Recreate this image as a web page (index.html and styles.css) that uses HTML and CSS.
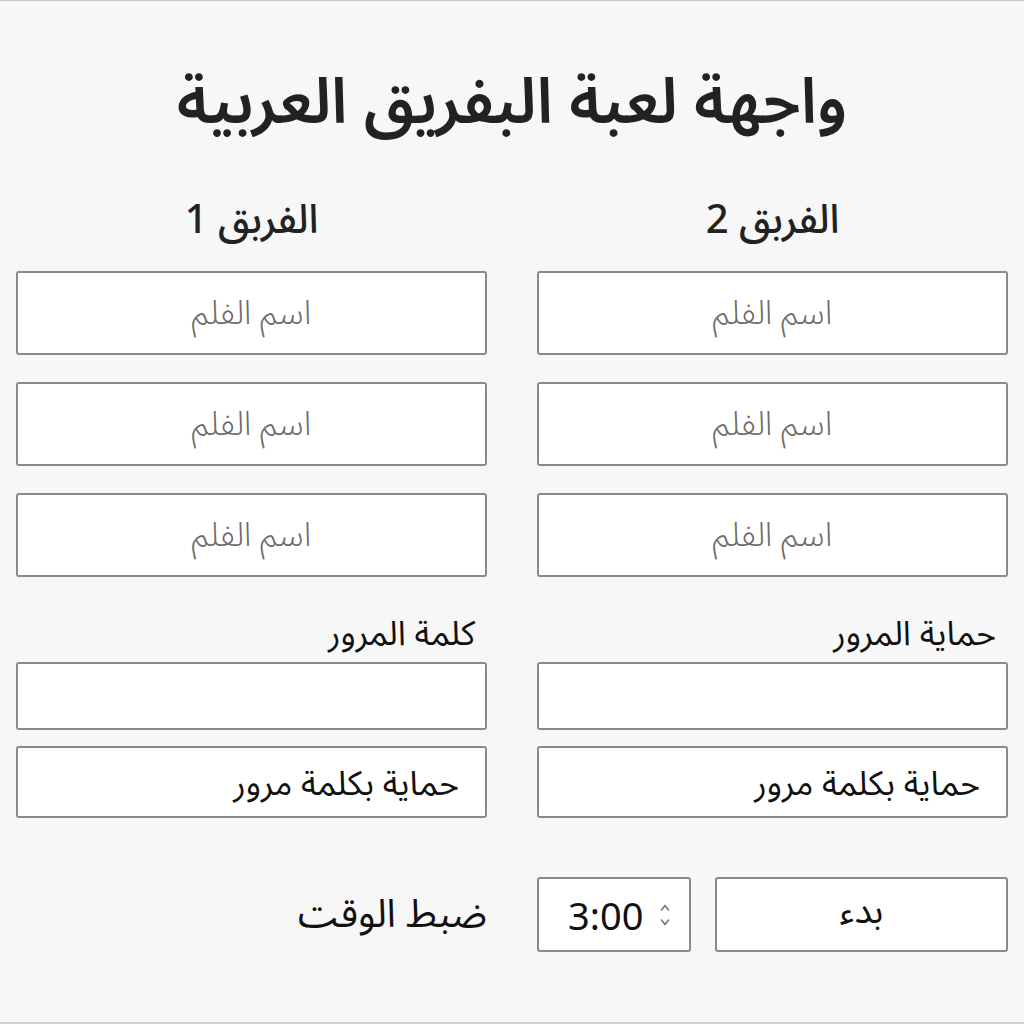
FILE: index.html
```html
<!DOCTYPE html>
<html lang="ar" dir="rtl">
<head>
<meta charset="utf-8">
<title>واجهة لعبة البفريق العربية</title>
<link rel="stylesheet" href="styles.css">
</head>
<body>
<main class="page">
  <h1 class="title">واجهة لعبة البفريق العربية</h1>
  <div class="teams">
    <section class="team">
      <h2 class="team-name">الفربق 2</h2>
      <div class="field placeholder">اسم الفلم</div>
      <div class="field placeholder">اسم الفلم</div>
      <div class="field placeholder">اسم الفلم</div>
      <label class="pw-label">حماية المرور</label>
      <div class="pw-input"></div>
      <button class="pw-btn">حماية بكلمة مرور</button>
    </section>
    <section class="team">
      <h2 class="team-name">الفربق 1</h2>
      <div class="field placeholder">اسم الفلم</div>
      <div class="field placeholder">اسم الفلم</div>
      <div class="field placeholder">اسم الفلم</div>
      <label class="pw-label">كلمة المرور</label>
      <div class="pw-input"></div>
      <button class="pw-btn">حماية بكلمة مرور</button>
    </section>
  </div>
  <div class="controls">
    <div class="control-group">
      <button class="start-btn">بدء</button>
      <div class="time-input">
        <span class="time-value">3:00</span>
        <svg class="spinner" width="12" height="32" viewBox="0 0 12 32" aria-hidden="true">
          <path d="M2.5 11 L6 6.5 L9.5 11" fill="none" stroke="#777" stroke-width="1.6" stroke-linecap="round" stroke-linejoin="round"/>
          <path d="M2.5 21 L6 25.5 L9.5 21" fill="none" stroke="#777" stroke-width="1.6" stroke-linecap="round" stroke-linejoin="round"/>
        </svg>
      </div>
    </div>
    <div class="time-label">ضبط الوقت</div>
  </div>
</main>
</body>
</html>
```
FILE: styles.css
```css
* { box-sizing: border-box; }
html, body { margin: 0; padding: 0; }
body {
  background: #f7f7f7;
  font-family: "Noto Sans Arabic", "Noto Sans", "DejaVu Sans", sans-serif;
  color: #1e1e1e;
}
.page {
  height: 1024px;
  border-top: 1px solid #c9c9c9;
  border-bottom: 2px solid #cfcfcf;
  padding: 0 16px;
}
.title {
  margin: 0;
  padding-top: 60px;
  height: 180px;
  text-align: center;
  font-size: 63px;
  font-weight: 600;
  line-height: 84px;
  color: #222;
}
.teams {
  display: grid;
  grid-template-columns: 1fr 1fr;
  column-gap: 50px;
}
.team {
  display: flex;
  flex-direction: column;
}
.team-name {
  margin: 0 0 18px;
  height: 72px;
  line-height: 80px;
  text-align: center;
  font-size: 40px;
  font-weight: 500;
  color: #222;
}
.field {
  height: 84px;
  background: #fff;
  border: 2px solid #8a8a8a;
  border-radius: 3px;
  display: flex;
  align-items: center;
  justify-content: center;
  font-size: 33px;
  margin-bottom: 27px;
}
.placeholder { color: #6c6c6c; font-weight: 300; }
.pw-label {
  margin-top: 8px;
  height: 44px;
  line-height: 44px;
  padding-right: 12px;
  font-size: 34px;
  color: #111;
  margin-bottom: 6px;
}
.pw-input {
  height: 68px;
  background: #fff;
  border: 2px solid #8a8a8a;
  border-radius: 3px;
}
.pw-btn {
  margin-top: 16px;
  height: 72px;
  background: #fff;
  border: 2px solid #8a8a8a;
  border-radius: 3px;
  font-family: inherit;
  font-size: 34px;
  color: #111;
  text-align: right;
  padding: 0 26px;
}
.controls {
  margin-top: 55px;
  display: grid;
  grid-template-columns: 1fr 1fr;
  column-gap: 50px;
  align-items: center;
}
.control-group {
  display: flex;
  gap: 24px;
  height: 75px;
}
.start-btn {
  flex: 1;
  background: #fff;
  border: 2px solid #8a8a8a;
  border-radius: 3px;
  font-family: inherit;
  font-size: 36px;
  line-height: 1;
  color: #111;
  padding-bottom: 6px;
}
.time-input {
  width: 154px;
  background: #fff;
  border: 2px solid #8a8a8a;
  border-radius: 3px;
  display: flex;
  align-items: center;
  gap: 16px;
  padding-left: 29px;
  direction: ltr;
}
.time-value {
  font-size: 38px;
  color: #111;
  font-family: "Noto Sans", "DejaVu Sans", sans-serif;
}
.time-label {
  font-size: 39px;
  color: #111;
  text-align: right;
}
```
